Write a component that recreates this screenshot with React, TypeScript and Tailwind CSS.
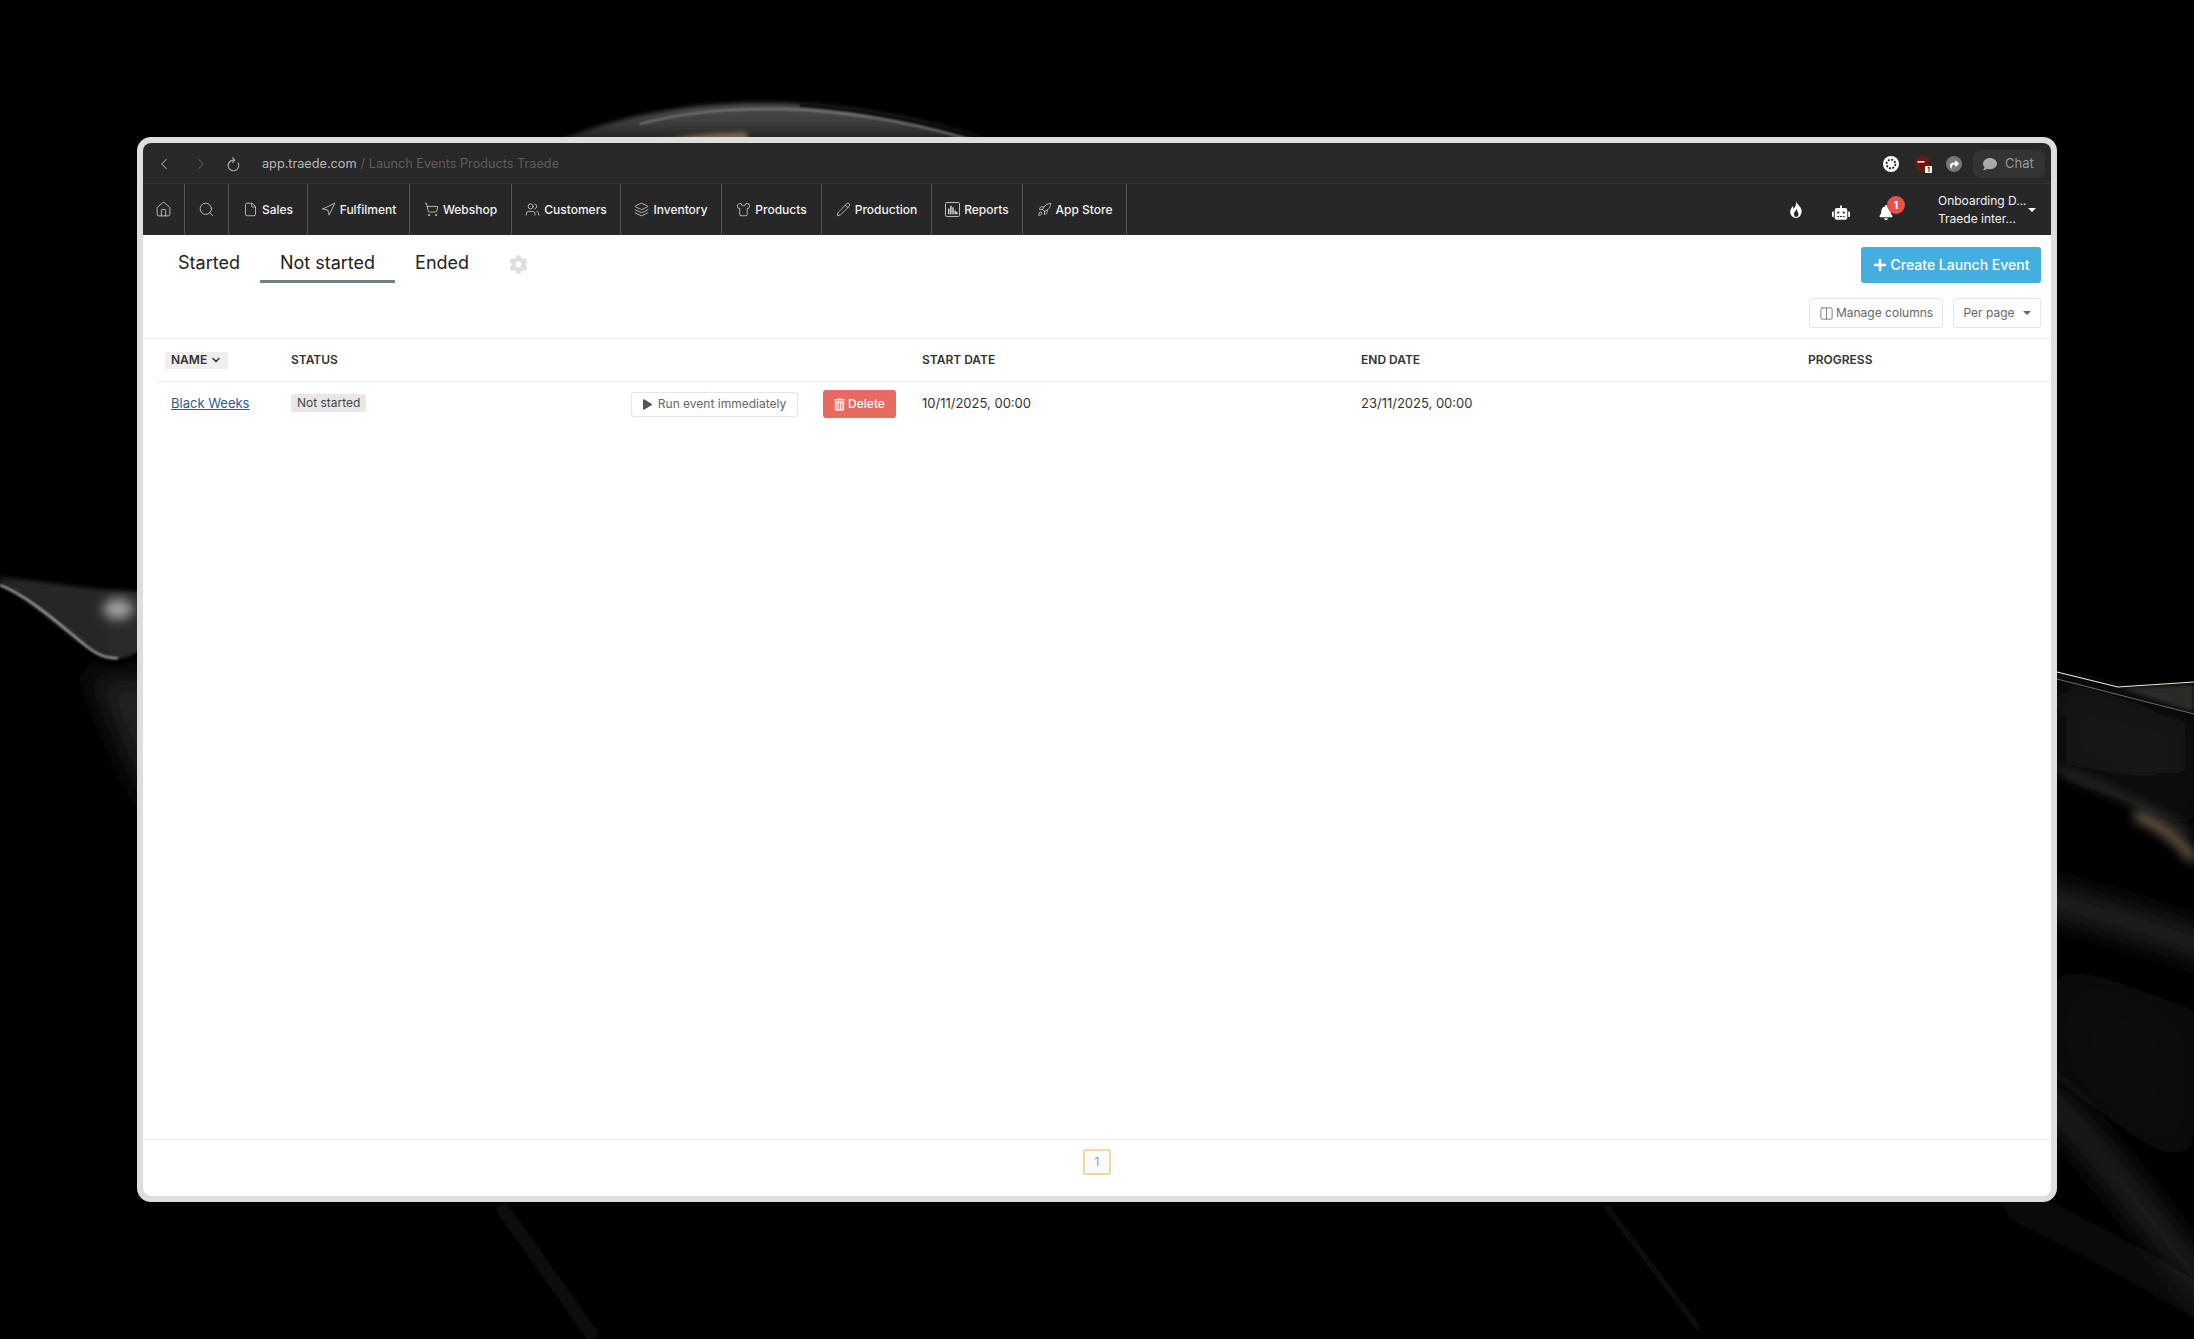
import { ChevronLeft, ChevronRight, House, Search, File, Navigation, ShoppingCart, Users, Layers, Shirt, Pencil, Rocket, Columns2, ChevronDown } from 'lucide-react';
import { FaBell, FaCog, FaComment, FaPlay, FaPlus, FaRobot, FaShare, FaTrashAlt } from 'react-icons/fa';

const ReportIcon = ({ className }: { className?: string }) => (
  <svg viewBox="0 0 14 14" className={className} fill="none" stroke="currentColor" strokeWidth="0.8">
    <rect x="0.5" y="0.5" width="13" height="13" rx="1" />
    <path d="M3.5 11.5V6M5.5 11.5V3.5M7.5 11.5V5M9.5 11.5V8M11 11.5V9" strokeWidth="1.3" />
  </svg>
);

const NAV_ITEMS = [
  { label: 'Sales', icon: File, width: 'w-[79px]' },
  { label: 'Fulfilment', icon: Navigation, width: 'w-[102px]' },
  { label: 'Webshop', icon: ShoppingCart, width: 'w-[102px]' },
  { label: 'Customers', icon: Users, width: 'w-[109px]' },
  { label: 'Inventory', icon: Layers, width: 'w-[101px]' },
  { label: 'Products', icon: Shirt, width: 'w-[100px]' },
  { label: 'Production', icon: Pencil, width: 'w-[110px]' },
  { label: 'Reports', icon: ReportIcon, width: 'w-[91px]' },
  { label: 'App Store', icon: Rocket, width: 'w-[104px]' },
];

const Blur = ({ id, amount }: { id: string; amount: number }) => (
  <filter id={id} filterUnits="userSpaceOnUse" x="0" y="0" width="2194" height="1339">
    <feGaussianBlur stdDeviation={amount} />
  </filter>
);

const Backdrop = () => (
  <svg viewBox="0 0 2194 1339" className="absolute inset-0 w-full h-full">
    <defs>
      <Blur id="b1" amount={1} />
      <Blur id="b2" amount={2} />
      <Blur id="b6" amount={6} />
      <Blur id="b14" amount={14} />
      <Blur id="b28" amount={28} />
      <linearGradient id="topFill" x1="0" y1="0" x2="0" y2="1">
        <stop offset="0" stopColor="#4c4c4c" />
        <stop offset="0.5" stopColor="#3e3e3e" />
        <stop offset="1" stopColor="#1e1e1e" />
      </linearGradient>
      <linearGradient id="leftFill" x1="0" y1="0" x2="1" y2="0">
        <stop offset="0" stopColor="#242424" />
        <stop offset="1" stopColor="#2a2a2a" />
      </linearGradient>
      <linearGradient id="rightFill" x1="0" y1="0" x2="0" y2="1">
        <stop offset="0" stopColor="#1e1e1e" />
        <stop offset="1" stopColor="#0a0a0a" />
      </linearGradient>
    </defs>
    <rect width="2194" height="1339" fill="#000" />

    {/* top swoosh */}
    <path d="M553 142 C630 112 700 102 770 103 C850 104 930 120 995 142 Z" fill="url(#topFill)" filter="url(#b2)" />
    <path d="M640 124 C690 111 730 109 780 109 C840 110 910 122 972 140" fill="none" stroke="#8c8c8c" strokeWidth="1.4" filter="url(#b1)" />
    <path d="M800 105 C860 109 930 122 990 142" fill="none" stroke="#050505" strokeWidth="2.5" filter="url(#b1)" />
    <path d="M655 142 C690 134 720 133 745 132 L750 142 Z" fill="#7a664c" filter="url(#b2)" />

    {/* left swoosh */}
    <path d="M0 577 C50 582 90 590 140 592 L140 652 C125 660 110 662 98 656 C60 630 30 600 0 585 Z" fill="url(#leftFill)" filter="url(#b2)" />
    <ellipse cx="118" cy="609" rx="15" ry="10" fill="#a5a5a5" filter="url(#b6)" />
    <path d="M85 668 C110 678 125 682 170 672 L170 830 C125 780 110 710 85 668 Z" fill="#232323" filter="url(#b14)" />
    <path d="M-20 710 C50 730 90 770 130 840" fill="none" stroke="#0e0e0e" strokeWidth="30" filter="url(#b28)" />
    <path d="M85 652 C105 666 122 667 140 654" fill="none" stroke="#000" strokeWidth="5" filter="url(#b1)" />
    <path d="M0 585 C30 597 60 625 85 645 C98 656 108 659 118 658" fill="none" stroke="#a8a8a8" strokeWidth="2.2" filter="url(#b1)" />

    {/* right swoosh */}
    <path d="M2057 680 L2194 716 L2194 830 L2057 770 Z" fill="url(#rightFill)" filter="url(#b14)" />
    <path d="M2118 688 L2194 684 L2194 712 Z" fill="#2a2a26" filter="url(#b2)" />
    <path d="M2057 672 L2118 687 L2194 682" fill="none" stroke="#e8e8e8" strokeWidth="1.1" />
    <path d="M2057 679 L2194 714" fill="none" stroke="#777" strokeWidth="0.9" />
    <path d="M2057 770 C2100 785 2150 810 2194 835" fill="none" stroke="#3c3c3c" strokeWidth="5" filter="url(#b6)" />
    <path d="M2135 815 C2160 825 2180 840 2194 860" fill="none" stroke="#8a7458" strokeWidth="8" filter="url(#b6)" />
    <path d="M2030 895 C2110 915 2150 930 2220 950" fill="none" stroke="#2c2c2c" strokeWidth="24" filter="url(#b14)" />
    <path d="M2057 960 L2194 1010 L2194 1180 L2057 1080 Z" fill="#0a0a0a" filter="url(#b28)" />
    <path d="M2040 1090 C2110 1160 2150 1220 2220 1310" fill="none" stroke="#2a2a2a" strokeWidth="22" filter="url(#b14)" />
    <path d="M2000 1195 C2090 1240 2140 1265 2220 1315" fill="none" stroke="#161616" strokeWidth="18" filter="url(#b14)" />

    {/* faint streaks under the window */}
    <g fill="none" filter="url(#b2)">
      <path d="M375 1250 L405 1339" stroke="#0c0c0c" strokeWidth="1.5" />
      <path d="M500 1205 L595 1339" stroke="#080808" strokeWidth="14" />
      <path d="M835 1205 L870 1300" stroke="#090909" strokeWidth="1.5" />
      <path d="M1540 1205 L1610 1339" stroke="#0c0c0c" strokeWidth="1.5" />
      <path d="M1605 1205 L1700 1330" stroke="#0a0a0a" strokeWidth="6" />
    </g>
  </svg>
);

const App = () => (
  <div className="relative h-[1339px] w-[2194px] overflow-hidden bg-black pl-[137px] pt-[137px] font-['Inter',sans-serif]">
    <Backdrop />

    <div className="relative flex h-[1065px] w-[1920px] flex-col overflow-hidden rounded-[14px] border-[6px] border-[#dedede] bg-white">
      {/* browser bar */}
      <div className="flex h-[41px] items-center border-b border-[#333] bg-[#282828] pr-[6px] pt-[2px]">
        <ChevronLeft className="ml-[12px] h-[18px] w-[18px] text-[#aaa]" strokeWidth={1.4} />
        <ChevronRight className="ml-[19px] h-[18px] w-[18px] text-[#666]" strokeWidth={1.4} />
        <svg viewBox="0 0 24 24" className="ml-[16px] h-[15px] w-[15px] text-[#aaa]" fill="none" stroke="currentColor" strokeWidth="1.9" strokeLinecap="round" strokeLinejoin="round">
          <path d="M19.5 9.5A8.5 8.5 0 1 1 12 5h1.5" />
          <path d="M10.5 1.5l3.5 3.5-3.5 3.5" />
        </svg>
        <span className="ml-[21px] text-[12.7px] text-[#b8b8b8]">app.traede.com</span>
        <span className="ml-[4px] text-[12.7px] text-[#5e5e5e]">/ Launch Events Products Traede</span>

        <div className="ml-auto flex items-center">
          <svg viewBox="0 0 16 16" className="h-[16px] w-[16px]">
            <circle cx="8" cy="8" r="8" fill="#fff" />
            <circle cx="8" cy="8" r="4.4" fill="none" stroke="#222" strokeWidth="1.8" strokeDasharray="2 1.4" />
            <circle cx="8" cy="8" r="1.2" fill="#fff" />
          </svg>
          <div className="relative ml-[15px] h-[16px] w-[16px]">
            <svg viewBox="0 0 16 16" className="h-[16px] w-[16px]">
              <path d="M8 0 L15 2 V9 C15 12.5 11 15 8 16 C5 15 1 12.5 1 9 V2 Z" fill="#6e1810" />
              <rect x="3.5" y="5" width="7" height="1.6" fill="#eee" />
            </svg>
            <span className="absolute -bottom-[1px] -right-[2px] flex h-[7px] w-[7px] items-center justify-center rounded-[1px] bg-white text-[6px] font-bold leading-none text-black">1</span>
          </div>
          <div className="ml-[16px] flex h-[16px] w-[16px] items-center justify-center rounded-full bg-[#777]">
            <FaShare className="h-[9px] w-[9px] text-white" />
          </div>
          <div className="ml-[11px] flex h-[28px] w-[72px] items-center rounded-[8px] bg-[#333] pl-[10px]">
            <FaComment className="h-[14px] w-[14px] text-[#aaa]" />
            <span className="ml-[8px] text-[13px] text-[#999]">Chat</span>
          </div>
        </div>
      </div>

      {/* main nav */}
      <div className="flex h-[51px] items-stretch bg-[#272727] text-white">
        <div className="flex w-[42px] items-center justify-center border-r border-[#555]">
          <House className="h-[17px] w-[17px] text-[#ddd]" strokeWidth={1.1} />
        </div>
        <div className="flex w-[44px] items-center justify-center border-r border-[#555]">
          <Search className="h-[17px] w-[17px] text-[#ddd]" strokeWidth={1.1} />
        </div>
        {NAV_ITEMS.map(({ label, icon: Icon, width }) => (
          <div key={label} className={`flex items-center justify-center gap-[4px] border-r border-[#555] ${width}`}>
            <Icon className="h-[15px] w-[15px] text-[#ddd]" strokeWidth={1.2} />
            <span className="text-[12px] font-medium text-[#f2f2f2]">{label}</span>
          </div>
        ))}

        <div className="ml-auto flex items-center">
          <svg viewBox="2.4 0 11 16" className="h-[17px] w-[14px] text-white" fill="currentColor">
            <path fillRule="evenodd" d="M8 0C8.5 3 12 4.5 13 8C14 12 11.5 16 8 16C4.5 16 2 13 2.5 9.5C2.8 7.5 4 6.5 4.5 5C5.5 6 5.8 7 5.8 7.5C7 5.5 8.4 3 8 0ZM8.4 7C8.2 9 6 10 6 12.5C6 14 7 15 8 15C9.5 15 10.5 13.5 10.2 12C10 10.5 8.6 9 8.4 7Z" />
          </svg>
          <FaRobot className="ml-[29px] h-[15px] w-[18px] translate-y-[3px] text-white" />
          <div className="relative ml-[29px] translate-y-[3px]">
            <FaBell className="h-[15px] w-[14px] text-white" />
            <span className="absolute -right-[12px] -top-[9px] flex h-[18px] w-[18px] items-center justify-center rounded-full bg-[#e8524a] text-[10px] font-bold text-white">1</span>
          </div>
          <div className="ml-[45px] w-[90px] text-[12px] leading-[18px] text-[#f2f2f2]">
            <div>Onboarding D...</div>
            <div>Traede inter...</div>
          </div>
          <span className="mr-[15px] h-0 w-0 border-x-[4px] border-t-[4px] border-x-transparent border-t-white" />
        </div>
      </div>

      {/* tabs */}
      <div className="flex h-[48px] items-start justify-between pl-[15px] pr-[10px]">
        <div className="flex h-[48px] items-stretch text-[18px] text-[#222]">
          <div className="flex items-center border-b-[3px] border-transparent px-[20px] pt-[10px]">Started</div>
          <div className="flex items-center border-b-[3px] border-[#747d8c] px-[20px] pt-[10px]">Not started</div>
          <div className="flex items-center border-b-[3px] border-transparent px-[20px] pt-[10px]">Ended</div>
          <div className="ml-[20px] flex items-center pt-[10px]">
            <FaCog className="h-[19px] w-[19px] text-[#dedede]" />
          </div>
        </div>
        <button className="mt-[12px] flex h-[36px] w-[180px] items-center justify-center gap-[4px] rounded-[3px] bg-[#44aee0] pb-[1px] text-[14px] font-medium text-white">
          <FaPlus className="h-[14px] w-[14px]" />
          Create Launch Event
        </button>
      </div>

      {/* table tools */}
      <div className="mt-[15px] flex justify-end gap-[10px] pr-[10px]">
        <button className="flex h-[30px] w-[134px] items-center justify-center gap-[2px] rounded-[3px] border border-[#e6e6e6] text-[12px] text-[#666]">
          <Columns2 className="h-[15px] w-[15px]" strokeWidth={1.3} />
          Manage columns
        </button>
        <button className="flex h-[30px] w-[88px] items-center justify-center gap-[8px] rounded-[3px] border border-[#e6e6e6] text-[12px] text-[#666]">
          Per page
          <span className="h-0 w-0 border-x-[4px] border-t-[4px] border-x-transparent border-t-[#666]" />
        </button>
      </div>

      {/* table */}
      <div className="mt-[10px] border-t border-[#eaeaea]">
        <div className="ml-[15px] flex h-[43px] items-center border-b border-[#eaeaea] text-[12px] font-semibold uppercase text-[#333]">
          <div className="ml-[7px] w-[126px]">
            <span className="flex h-[17px] w-[63px] items-center gap-[3px] bg-[#efefef] pl-[6px]">
              NAME
              <ChevronDown className="h-[12px] w-[12px]" strokeWidth={3} />
            </span>
          </div>
          <div className="w-[631px]">STATUS</div>
          <div className="w-[439px]">START DATE</div>
          <div className="w-[447px]">END DATE</div>
          <div>PROGRESS</div>
        </div>
        <div className="ml-[15px] flex h-[44px] items-center text-[13px] text-[#333]">
          <div className="ml-[13px] w-[120px]">
            <a className="text-[#1f5f8b] underline">Black Weeks</a>
          </div>
          <div className="w-[340px]">
            <span className="inline-flex h-[18px] -translate-y-[1px] items-center rounded-[3px] bg-[#e8e8e8] px-[6px] text-[12px] text-[#444]">Not started</span>
          </div>
          <button className="flex h-[25px] w-[167px] items-center justify-center gap-[6px] rounded-[3px] border border-[#e6e6e6] text-[12px] text-[#666]">
            <FaPlay className="h-[11px] w-[9px] text-[#555]" />
            Run event immediately
          </button>
          <button className="ml-[25px] flex h-[28px] w-[73px] items-center justify-center gap-[3px] rounded-[3px] bg-[#e66a60] text-[12px] font-medium text-white">
            <FaTrashAlt className="h-[13px] w-[11px] text-[#fbdcd9]" />
            Delete
          </button>
          <div className="ml-[26px] w-[439px]">10/11/2025, 00:00</div>
          <div>23/11/2025, 00:00</div>
        </div>
      </div>

      {/* pagination */}
      <div className="mt-auto flex h-[57px] justify-center border-t border-[#eeeeee] pt-[9px]">
        <div className="flex h-[26px] w-[28px] items-center justify-center rounded-[3px] border-2 border-[#f0d9a0] bg-[#fbfbfe] text-[12px] text-[#999]">1</div>
      </div>
    </div>
  </div>
);

export default App;
